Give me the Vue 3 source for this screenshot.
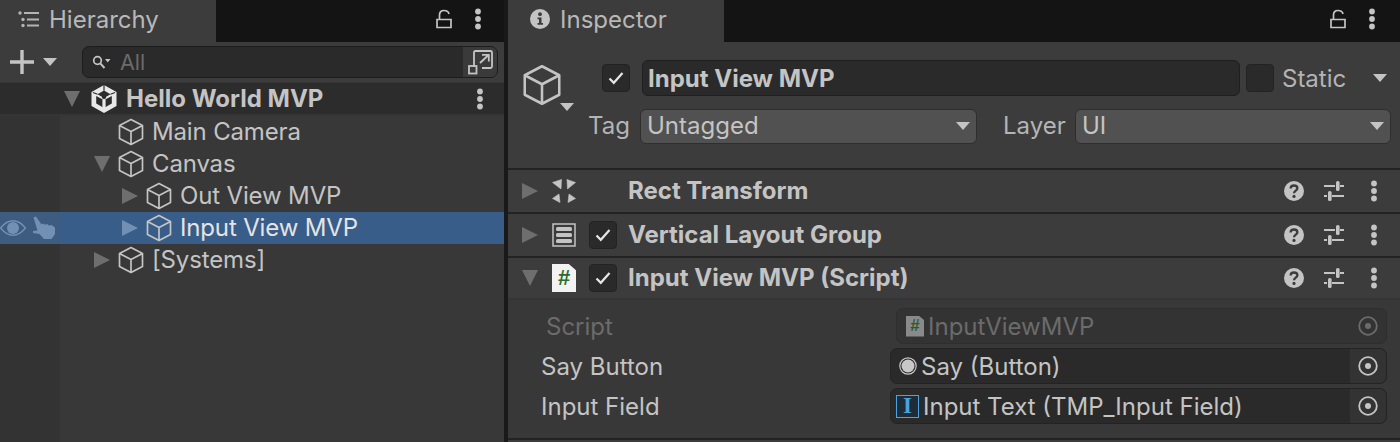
<script setup>
const treeRows = [
  { name: 'Main Camera', level: 1, caret: '' },
  { name: 'Canvas', level: 1, caret: 'down' },
  { name: 'Out View MVP', level: 2, caret: 'right' },
  { name: 'Input View MVP', level: 2, caret: 'right', selected: true },
  { name: '[Systems]', level: 1, caret: 'right' },
];

const components = [
  { name: 'Rect Transform', icon: 'rect', open: false, toggle: false },
  { name: 'Vertical Layout Group', icon: 'layout', open: false, toggle: true },
  { name: 'Input View MVP (Script)', icon: 'script', open: true, toggle: true },
];
</script>

<template>
  <svg class="defs" width="0" height="0">
    <defs>
      <symbol id="cube" viewBox="0 0 26 28">
        <path d="M13 1.500 24.500 7.500V20.500L13 26.500 1.500 20.500V7.500ZM1.500 7.500 13 13.500 24.500 7.500M13 13.500V26.500" fill="none" stroke="currentColor" stroke-width="1.700" stroke-linejoin="round" />
      </symbol>
      <symbol id="kebab" viewBox="0 0 8 22">
        <circle cx="4" cy="3.500" r="2.900" fill="currentColor" />
        <circle cx="4" cy="11" r="2.900" fill="currentColor" />
        <circle cx="4" cy="18.500" r="2.900" fill="currentColor" />
      </symbol>
      <symbol id="lock" viewBox="0 0 16 20">
        <path d="M1 10.500H15V18.500H1ZM3.500 10.500V6C3.500 3 5.300 1.500 8 1.500 10.700 1.500 12.500 2.800 13 5" fill="none" stroke="currentColor" stroke-width="1.700" />
      </symbol>
      <symbol id="check" viewBox="0 0 16 14">
        <path d="M1.500 7.500 5.800 11.800 14.500 2" fill="none" stroke="currentColor" stroke-width="2.200" />
      </symbol>
      <symbol id="target" viewBox="0 0 20 20">
        <circle cx="10" cy="10" r="8.800" fill="none" stroke="currentColor" stroke-width="1.800" />
        <circle cx="10" cy="10" r="3" fill="currentColor" />
      </symbol>
      <symbol id="help" viewBox="0 0 20 20">
        <circle cx="10" cy="10" r="10" fill="currentColor" />
        <path d="M6.600 7.600C6.600 5.600 8 4.500 10 4.500 12 4.500 13.400 5.600 13.400 7.300 13.400 9.600 10 9.600 10 12.200" fill="none" stroke="#3c3c3c" stroke-width="2.300" />
        <circle cx="10" cy="15.400" r="1.600" fill="#3c3c3c" />
      </symbol>
      <symbol id="sliders" viewBox="0 0 20 20">
        <path d="M0 5H11M16 5H20M0 15H3M8 15H20" stroke="currentColor" stroke-width="2" />
        <rect x="12" y="0" width="3.600" height="10" rx="1.600" fill="currentColor" />
        <rect x="4" y="10" width="3.600" height="10" rx="1.600" fill="currentColor" />
      </symbol>
    </defs>
  </svg>

  <div class="editor">
    <section class="panel hierarchy">
      <div class="tabbar">
        <div class="tab">
          <svg class="tab-icon" width="21" height="17" viewBox="0 0 21 17">
            <g fill="#b4b4b4">
              <circle cx="2" cy="2" r="1.700" />
              <circle cx="5" cy="8.500" r="1.700" />
              <circle cx="5" cy="14.500" r="1.700" />
              <rect x="6" y="1" width="15" height="2" />
              <rect x="9" y="7.500" width="12" height="2" />
              <rect x="9" y="13.500" width="12" height="2" />
            </g>
          </svg>
          <span>Hierarchy</span>
        </div>
        <div class="tab-actions left-actions">
          <svg class="lock" width="16" height="20"><use href="#lock" /></svg>
          <svg class="kebab" width="8" height="22"><use href="#kebab" /></svg>
        </div>
      </div>

      <div class="toolbar">
        <svg class="plus" width="24" height="24" viewBox="0 0 24 24">
          <path d="M0 12H24M12 0V24" stroke="#c4c4c4" stroke-width="3.400" />
        </svg>
        <span class="tri tri-down small"></span>
        <div class="search">
          <svg class="search-icon" width="19" height="14" viewBox="0 0 19 14">
            <circle cx="5.500" cy="5.500" r="3.800" fill="none" stroke="#c4c4c4" stroke-width="1.700" />
            <path d="M8.300 8.300 12.500 13" stroke="#c4c4c4" stroke-width="2" />
            <path d="M13 4H18.500L15.700 7.500Z" fill="#c4c4c4" />
          </svg>
          <span class="search-text">All</span>
          <div class="search-btn">
            <svg width="25" height="25" viewBox="0 0 25 25">
              <path d="M6 17V2.500Q6 1 7.500 1H22.500Q24 1 24 2.500V16.500Q24 18 22.500 18H14M12 13 20.500 5M14 4.800H20.800V11.500" fill="none" stroke="#c4c4c4" stroke-width="1.800" />
              <rect x="1" y="16" width="7.500" height="7.500" fill="none" stroke="#c4c4c4" stroke-width="1.800" />
            </svg>
          </div>
        </div>
      </div>

      <div class="scene-row">
        <span class="tri tri-down"></span>
        <svg class="unity" width="26" height="28" viewBox="0 0 26 28">
          <path d="M13 0 25.500 7V21L13 28 .5 21V7Z" fill="#e8e8e8" />
          <path d="M13 5.500 6.500 9.300 13 13 19.500 9.300ZM13 13V20.500M5.200 11V18.500L11.800 22.300V14.500ZM20.800 11V18.500L14.200 22.300V14.500Z" fill="#2c2c2c" />
          <path d="M13 0V5.500M2 7.500 6.500 9.300M24 7.500 19.500 9.300" stroke="#2c2c2c" stroke-width="1.200" />
          <path d="M10.800 13 13 14.200 15.200 13 13 5.600Z" fill="#2c2c2c" />
          <path d="M11.500 14.500 13 15.400 14.500 14.500V22L13 23 11.500 22Z" fill="#e8e8e8" />
        </svg>
        <span class="scene-name">Hello World MVP</span>
        <svg class="kebab scene-kebab" width="8" height="22"><use href="#kebab" /></svg>
      </div>

      <div class="tree">
        <div v-for="row in treeRows" :key="row.name" class="tree-row" :class="{ selected: row.selected }">
          <div class="gutter">
            <template v-if="row.selected">
              <svg width="26" height="16" viewBox="0 0 26 16">
                <path d="M.5 8C5 2.500 9 .8 13 .8S21 2.500 25.500 8C21 13.500 17 15.200 13 15.200S5 13.500 .5 8Z" fill="none" stroke="#7290b4" stroke-width="1.500" />
                <circle cx="13" cy="8" r="6" fill="#7290b4" />
              </svg>
              <svg class="hand" width="24" height="24" viewBox="0 0 24 24">
                <path d="M1.500 1.500 4 .5 9.500 8.500 11 7.500 13 8.800 15 8 17 9.500 19.500 9 23 11.500 23 18 19.500 23 12 23 7.500 18 1 17 1 15 5.500 14.500Z" fill="#7290b4" />
              </svg>
            </template>
          </div>
          <div class="tree-content" :class="'level-' + row.level">
            <span class="caret-box">
              <span v-if="row.caret" class="tri" :class="row.caret === 'down' ? 'tri-down' : 'tri-right'"></span>
            </span>
            <svg class="cube" width="26" height="28"><use href="#cube" /></svg>
            <span class="tree-name">{{ row.name }}</span>
          </div>
        </div>
        <div class="tree-fill"><div class="gutter"></div></div>
      </div>
    </section>

    <section class="panel inspector">
      <div class="tabbar">
        <div class="tab">
          <svg class="info" width="20" height="20" viewBox="0 0 20 20">
            <circle cx="10" cy="10" r="10" fill="#c4c4c4" />
            <circle cx="10" cy="5.200" r="1.900" fill="#3c3c3c" />
            <path d="M7.500 8.500H11.500V14H13V15.800H7.500V14H9V10.300H7.500Z" fill="#3c3c3c" />
          </svg>
          <span>Inspector</span>
        </div>
        <div class="tab-actions right-actions">
          <svg class="lock" width="16" height="20"><use href="#lock" /></svg>
          <svg class="kebab" width="8" height="22"><use href="#kebab" /></svg>
        </div>
      </div>

      <div class="object-head">
        <div class="big-cube">
          <svg width="40" height="42" viewBox="0 0 26 28"><use href="#cube" /></svg>
          <span class="tri tri-down small"></span>
        </div>
        <div class="object-fields">
          <div class="name-line">
            <span class="checkbox"><svg width="16" height="14"><use href="#check" /></svg></span>
            <div class="name-field">Input View MVP</div>
            <span class="checkbox"></span>
            <span class="static">Static</span>
            <span class="tri tri-down small"></span>
          </div>
          <div class="tag-line">
            <span class="tag-label">Tag</span>
            <div class="popup tag-popup"><span class="popup-text">Untagged</span><span class="tri tri-down small"></span></div>
            <span class="layer-label">Layer</span>
            <div class="popup layer-popup"><span class="popup-text">UI</span><span class="tri tri-down small"></span></div>
          </div>
        </div>
      </div>

      <div v-for="comp in components" :key="comp.name" class="comp-row" :class="{ open: comp.open }">
        <span class="comp-caret">
          <span class="tri" :class="comp.open ? 'tri-down' : 'tri-right'"></span>
        </span>
        <span class="comp-icon">
          <svg v-if="comp.icon === 'rect'" width="24" height="24" viewBox="0 0 24 24">
            <g fill="#c4c4c4" stroke="#c4c4c4" stroke-width=".6" stroke-linejoin="round">
              <path d="M.5 3.500 9.500 .5 9 10Z" />
              <path d="M23.500 3.500 15 .5 15.500 10Z" />
              <path d="M.5 19.500 7 15 8 23.500Z" />
              <path d="M23.500 19.500 17 15 16 23.500Z" />
            </g>
          </svg>
          <svg v-else-if="comp.icon === 'layout'" width="24" height="24" viewBox="0 0 24 24">
            <rect x="1" y="1" width="22" height="22" fill="none" stroke="#c4c4c4" stroke-width="1.500" />
            <rect x="4" y="4" width="16" height="4" rx="1.500" fill="#c4c4c4" />
            <rect x="4" y="10" width="16" height="4" rx="1.500" fill="#c4c4c4" />
            <rect x="4" y="16" width="16" height="4" rx="1.500" fill="#c4c4c4" />
          </svg>
          <span v-else class="script-icon">#</span>
        </span>
        <span class="checkbox comp-check" :class="{ hidden: !comp.toggle }">
          <svg width="16" height="14"><use href="#check" /></svg>
        </span>
        <span class="comp-name">{{ comp.name }}</span>
        <svg class="help" width="20" height="20"><use href="#help" /></svg>
        <svg class="sliders" width="20" height="20"><use href="#sliders" /></svg>
        <svg class="kebab" width="8" height="22"><use href="#kebab" /></svg>
      </div>

      <div class="props">
        <div class="prop disabled">
          <span class="prop-label">Script</span>
          <div class="obj-field">
            <span class="script-icon mini">#</span>
            <span class="obj-text">InputViewMVP</span>
            <span class="picker"><svg width="20" height="20"><use href="#target" /></svg></span>
          </div>
        </div>
        <div class="prop">
          <span class="prop-label">Say Button</span>
          <div class="obj-field">
            <svg class="btn-icon" width="18" height="18" viewBox="0 0 18 18">
              <circle cx="9" cy="9" r="8.200" fill="none" stroke="#c8c8c8" stroke-width="1.200" />
              <circle cx="9" cy="9" r="6.500" fill="#c8c8c8" />
            </svg>
            <span class="obj-text">Say (Button)</span>
            <span class="picker"><svg width="20" height="20"><use href="#target" /></svg></span>
          </div>
        </div>
        <div class="prop">
          <span class="prop-label">Input Field</span>
          <div class="obj-field">
            <span class="input-icon">I</span>
            <span class="obj-text">Input Text (TMP_Input Field)</span>
            <span class="picker"><svg width="20" height="20"><use href="#target" /></svg></span>
          </div>
        </div>
      </div>
      <div class="foot"></div>
    </section>
  </div>
</template>

<style>
html,
body {
  margin: 0;
  background: #191919;
}
</style>

<style scoped>
.defs {
  position: absolute;
}

.editor {
  display: flex;
  width: 1400px;
  height: 442px;
  overflow: hidden;
  background: #191919;
  font-family: Inter, "Liberation Sans", sans-serif;
  font-size: 24px;
  color: #c4c4c4;
}

.panel {
  display: flex;
  flex-direction: column;
  background: #3c3c3c;
}

.hierarchy {
  width: 504px;
  margin-right: 4px;
}

.inspector {
  flex: 1;
}

.tabbar {
  display: flex;
  height: 42px;
  flex-shrink: 0;
  background: #141414;
}

.tab {
  display: flex;
  align-items: center;
  width: 216px;
  padding-bottom: 4px;
  box-sizing: border-box;
  background: #3c3c3c;
  color: #b8b8b8;
}

.tab-icon {
  margin: 0 10px 0 18px;
}

.info {
  margin: 0 10px 0 22px;
}

.tab-actions {
  display: flex;
  flex: 1;
  align-items: center;
  justify-content: flex-end;
  color: #c4c4c4;
  padding-bottom: 4px;
}

.left-actions {
  padding-right: 22px;
}

.right-actions {
  padding-right: 24px;
}

.lock {
  margin-right: 22px;
}

.kebab {
  color: #c4c4c4;
  flex-shrink: 0;
}

.tri {
  display: inline-block;
  flex-shrink: 0;
  width: 0;
  height: 0;
}

.tri-down {
  border-left: 8.500px solid transparent;
  border-right: 8.500px solid transparent;
  border-top: 16px solid #6e6e6e;
}

.tri-right {
  border-top: 8.500px solid transparent;
  border-bottom: 8.500px solid transparent;
  border-left: 16px solid #6e6e6e;
}

.tri-down.small {
  border-left-width: 7px;
  border-right-width: 7px;
  border-top: 8.500px solid #c4c4c4;
}

.toolbar {
  display: flex;
  align-items: center;
  height: 40px;
  padding: 0 6px 0 10px;
  border-bottom: 1px solid #353535;
  flex-shrink: 0;
}

.plus {
  margin-right: 9px;
}

.search {
  display: flex;
  align-items: center;
  height: 32px;
  flex: 1;
  margin-left: 25px;
  box-sizing: border-box;
  background: #2a2a2a;
  border: 1.500px solid #1d1d1d;
  border-radius: 7px;
  overflow: hidden;
}

.search-icon {
  margin-left: 9px;
}

.search-text {
  margin-left: 9px;
  color: #6b6b6b;
  flex: 1;
  font-size: 21.500px;
}

.search-btn {
  display: flex;
  align-items: center;
  justify-content: center;
  width: 34px;
  height: 100%;
  background: #3a3a3a;
}

.scene-row {
  display: flex;
  align-items: center;
  height: 31px;
  padding-left: 64px;
  background: #2c2c2c;
  border-bottom: 2px solid #353535;
  flex-shrink: 0;
}

.unity {
  margin-left: 11px;
}

.scene-name {
  margin-left: 9px;
  font-weight: 700;
  flex: 1;
}

.scene-kebab {
  margin-right: 20px;
}

.tree {
  display: flex;
  flex-direction: column;
  flex: 1;
  background: #383838;
}

.tree-row {
  display: flex;
  height: 32px;
  flex-shrink: 0;
}

.gutter {
  display: flex;
  align-items: center;
  gap: 6px;
  width: 60px;
  flex-shrink: 0;
  background: #333333;
}

.tree-fill {
  display: flex;
  flex: 1;
}

.tree-row.selected {
  background: #385d89;
}

.tree-row.selected .gutter {
  background: #3e5c80;
}

.tree-row.selected .tree-name {
  color: #e4e4e4;
}

.tree-row.selected .tri-right {
  border-left-color: #7290b4;
}

.tree-content {
  display: flex;
  align-items: center;
}

.level-1 {
  padding-left: 33px;
}

.level-2 {
  padding-left: 61px;
}

.caret-box {
  display: flex;
  align-items: center;
  justify-content: center;
  width: 17px;
  margin-right: 8px;
}

.cube {
  color: #c4c4c4;
}

.tree-name {
  margin: 0 0 2px 8px;
  letter-spacing: -0.15px;
}

.object-head {
  display: flex;
  height: 128px;
  box-sizing: border-box;
  border-bottom: 2px solid #232323;
  flex-shrink: 0;
}

.big-cube {
  display: flex;
  width: 81px;
  padding: 22px 0 0 14px;
  box-sizing: border-box;
  color: #c4c4c4;
}

.big-cube .tri {
  margin: 39px 0 0 -2px;
}

.object-fields {
  flex: 1;
  padding-top: 18px;
  padding-right: 9px;
}

.name-line {
  display: flex;
  align-items: center;
  height: 36px;
  padding-left: 13px;
}

.checkbox {
  display: flex;
  align-items: center;
  justify-content: center;
  width: 28px;
  height: 28px;
  box-sizing: border-box;
  background: #2a2a2a;
  border: 1.500px solid #232323;
  border-radius: 4px;
  color: #e6e6e6;
  flex-shrink: 0;
}

.checkbox.hidden {
  visibility: hidden;
}

.name-field {
  display: flex;
  align-items: center;
  width: 598px;
  height: 36px;
  margin: 0 6px 0 12px;
  padding-left: 5px;
  box-sizing: border-box;
  background: #2a2a2a;
  border: 1.500px solid #1f1f1f;
  border-radius: 6px;
  font-weight: 700;
  flex-shrink: 0;
}

.static {
  margin-left: 8px;
  width: 91px;
  color: #b4b4b4;
}

.tag-line {
  display: flex;
  align-items: center;
  height: 36px;
  margin-top: 12px;
}

.tag-label {
  width: 52px;
  margin-left: -1px;
  padding-bottom: 2px;
  color: #b4b4b4;
}

.layer-label {
  margin-left: 26px;
  width: 72px;
  padding-bottom: 2px;
  color: #b4b4b4;
}

.popup {
  display: flex;
  align-items: center;
  justify-content: space-between;
  height: 35px;
  padding: 0 6px;
  box-sizing: border-box;
  background: #515151;
  border: 1.500px solid #2e2e2e;
  border-radius: 6px;
}

.popup-text {
  padding-bottom: 2px;
}

.tag-popup {
  width: 337px;
}

.layer-popup {
  flex: 1;
}

.comp-row {
  display: flex;
  align-items: center;
  height: 44px;
  box-sizing: border-box;
  border-bottom: 2px solid #232323;
  flex-shrink: 0;
}

.comp-row.open {
  height: 42px;
  border-bottom: 2px solid #353535;
}

.comp-caret {
  display: flex;
  justify-content: center;
  width: 17px;
  margin: 0 1px 0 13px;
}

.comp-icon {
  display: flex;
  justify-content: center;
  width: 24px;
  margin-left: 13px;
}

.comp-check {
  margin-left: 13px;
}

.comp-name {
  margin-left: 11px;
  padding-bottom: 1px;
  flex: 1;
  font-weight: 700;
}

.help {
  color: #c4c4c4;
}

.sliders {
  color: #c4c4c4;
  margin-left: 20px;
}

.comp-row .kebab {
  margin: 0 22px 0 26px;
}

.script-icon {
  display: flex;
  align-items: center;
  justify-content: center;
  width: 24px;
  height: 28px;
  background: #f2f2f2;
  clip-path: polygon(0 0, 70% 0, 100% 22%, 100% 100%, 0 100%);
  font-family: "Liberation Sans", sans-serif;
  font-size: 22px;
  font-weight: 700;
  color: #2e6b2e;
}

.script-icon.mini {
  width: 18px;
  height: 21px;
  margin-left: 9px;
  background: #8a8a8a;
  font-size: 17px;
  color: #2f5a2f;
}

.props {
  display: flex;
  flex-direction: column;
  flex: 1;
  padding-top: 8px;
  background: #383838;
}

.prop {
  display: flex;
  align-items: center;
  height: 36px;
  margin-bottom: 4px;
  padding-right: 13px;
}

.prop-label {
  width: 349px;
  margin-left: 33px;
  flex-shrink: 0;
}

.obj-field {
  display: flex;
  align-items: center;
  flex: 1;
  height: 36px;
  box-sizing: border-box;
  background: #2a2a2a;
  border: 1.500px solid #232323;
  border-radius: 7px;
  overflow: hidden;
}

.obj-text {
  flex: 1;
  margin-left: 4px;
}

.picker {
  display: flex;
  align-items: center;
  justify-content: center;
  width: 36px;
  height: 100%;
  background: #333333;
}

.btn-icon {
  margin-left: 8px;
}

.input-icon {
  display: flex;
  align-items: center;
  justify-content: center;
  width: 23px;
  height: 23px;
  margin-left: 5px;
  box-sizing: border-box;
  border: 1px solid #4aa3e0;
  background: #1f2c38;
  font-family: "Liberation Serif", serif;
  font-size: 23px;
  font-weight: 700;
  color: #4aa3e0;
}

.prop.disabled {
  color: #6b6b6b;
}

.prop.disabled .prop-label {
  margin-left: 38px;
  width: 350px;
}

.prop.disabled .obj-field {
  background: #333333;
  border-color: #2e2e2e;
}

.prop.disabled .picker {
  color: #6b6b6b;
}

.foot {
  height: 4px;
  box-sizing: border-box;
  border-top: 2px solid #232323;
  flex-shrink: 0;
}
</style>
